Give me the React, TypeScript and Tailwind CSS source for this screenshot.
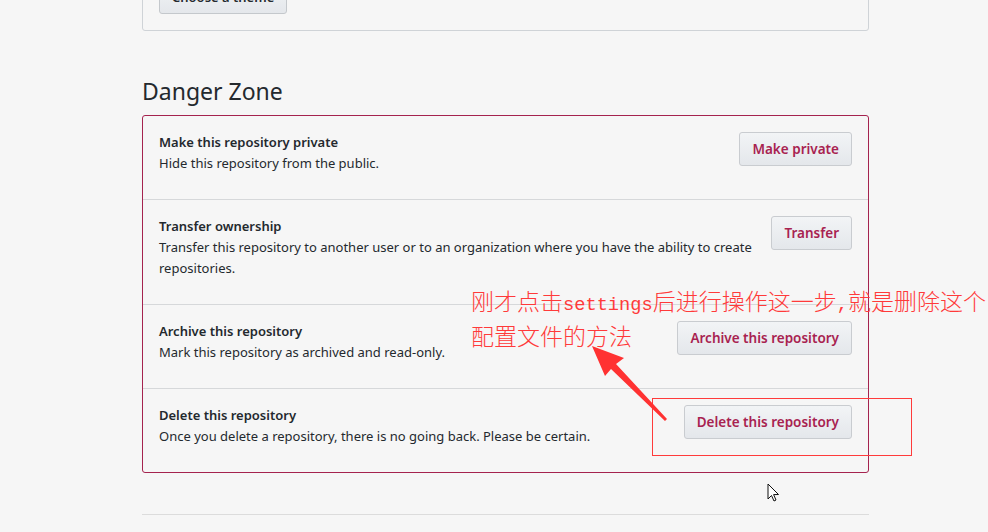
import React from "react";

const rows = [
  {
    title: "Make this repository private",
    desc: "Hide this repository from the public.",
    action: "Make private",
  },
  {
    title: "Transfer ownership",
    desc: "Transfer this repository to another user or to an organization where you have the ability to create repositories.",
    action: "Transfer",
  },
  {
    title: "Archive this repository",
    desc: "Mark this repository as archived and read-only.",
    action: "Archive this repository",
  },
  {
    title: "Delete this repository",
    desc: "Once you delete a repository, there is no going back. Please be certain.",
    action: "Delete this repository",
  },
];

function DangerButton({ label }: { label: string }) {
  return (
    <button className="h-[34px] shrink-0 rounded-[3px] border border-[#c9ccd0] bg-gradient-to-b from-[#f2f4f6] to-[#e4e7eb] px-3 text-[13.5px] font-semibold text-[#a82250]">
      {label}
    </button>
  );
}

export default function App() {
  return (
    <div
      className="relative h-[532px] w-[988px] overflow-hidden bg-[#f6f6f6] text-[#24292e]"
      style={{ fontFamily: '"Noto Sans", "Open Sans", sans-serif' }}
    >
      <div className="ml-[142px] w-[727px]">
        {/* theme box, top cut off */}
        <div className="-mt-[36px] rounded-b-[3px] border border-[#cfd3d7] px-4 py-4">
          <button className="h-[33px] rounded-[3px] border border-[#c4c8cc] bg-gradient-to-b from-[#f2f4f6] to-[#e4e7eb] px-3 text-[13px] font-semibold">
            Choose a theme
          </button>
        </div>

        <h2 className="mb-[6px] mt-[42px] text-[23px] leading-[36px] font-normal">Danger Zone</h2>

        <div className="rounded-[3px] border border-[#a5234f]">
          {rows.map((r, i) => (
            <div
              key={r.title}
              className={`flex items-start justify-between gap-4 px-4 pb-[25px] pt-4 ${
                i > 0 ? "border-t border-[#d6d8da]" : ""
              }`}
            >
              <div className="text-[13px] leading-[21px]">
                <p className="font-semibold">{r.title}</p>
                <p className="max-w-[605px]">{r.desc}</p>
              </div>
              <DangerButton label={r.action} />
            </div>
          ))}
        </div>

        <div className="mt-[41px] border-t border-[#dcdcdc]" />
      </div>

      {/* annotation */}
      <div
        className="absolute left-[471px] top-[285px] text-[23px] leading-[30px] text-[#ff3a3a]"
        style={{ fontFamily: '"Noto Sans CJK SC", sans-serif' }}
      >
        <div className="whitespace-nowrap font-light">
          刚才点击
          <span className="text-[18.7px]" style={{ fontFamily: '"Liberation Mono", monospace' }}>settings</span>
          后进行操作这一步
          <span className="text-[18.7px]" style={{ fontFamily: '"Liberation Mono", monospace' }}>,</span>
          就是删除这个
        </div>
        <div className="whitespace-nowrap font-light">配置文件的方法</div>
      </div>

      <div className="absolute left-[652px] top-[398px] h-[58px] w-[260px] border border-[#ff3b3b]" />

      <svg className="absolute left-0 top-0" width="988" height="532">
        <polygon points="592,346 624,358 616,364 667,419 665,421 611,369 605,376" fill="#ff3232" />
        <path
          d="M768 484 L768 499 L771.5 495.5 L774 501 L776 500 L773.6 494.6 L778.5 494.5 Z"
          fill="#fff"
          stroke="#111"
          strokeWidth="1"
          strokeLinejoin="round"
        />
      </svg>
    </div>
  );
}
